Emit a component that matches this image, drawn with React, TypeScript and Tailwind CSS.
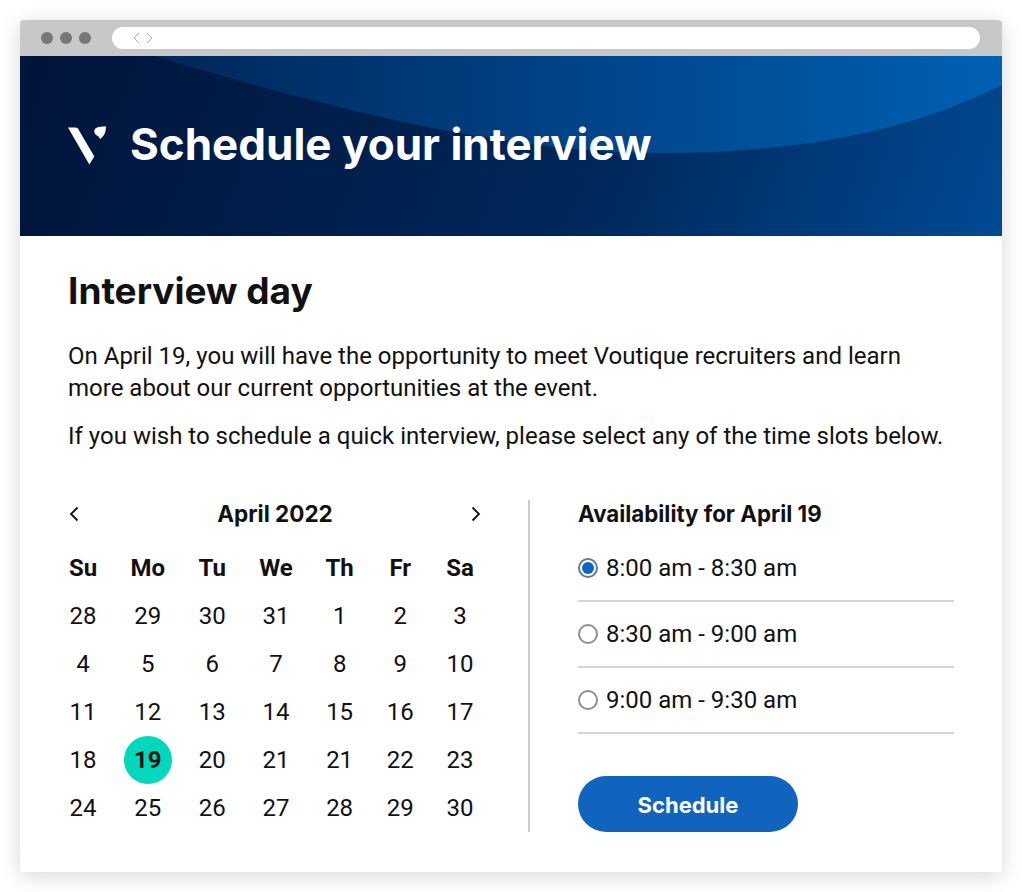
import { useState } from 'react';

const weeks = [
  ['28', '29', '30', '31', '1', '2', '3'],
  ['4', '5', '6', '7', '8', '9', '10'],
  ['11', '12', '13', '14', '15', '16', '17'],
  ['18', '19', '20', '21', '21', '22', '23'],
  ['24', '25', '26', '27', '28', '29', '30'],
];
const dayNames = ['Su', 'Mo', 'Tu', 'We', 'Th', 'Fr', 'Sa'];
const slots = ['8:00 am - 8:30 am', '8:30 am - 9:00 am', '9:00 am - 9:30 am'];

function Logo() {
  return (
    <svg width="40" height="40" viewBox="0 0 40 40" className="shrink-0 mt-[3px]">
      <path d="M0 1.5H7.5C9 1.5 9.8 2.2 10.5 3.4L26.3 30.5L21.3 38.5L0 1.5Z" fill="#fff" />
      <path d="M32 13.2C31.6 10.8 30.2 10.2 28.8 9.4C26.5 8.1 25.8 5.6 26.7 3.6C27.7 1.4 30 0.8 33 0.7L37.7 0.3C38.5 5 36.5 10 32 13.2Z" fill="#fff" />
    </svg>
  );
}

function Chevron({ dir }: { dir: 'left' | 'right' }) {
  return (
    <svg width="12" height="16" viewBox="0 0 12 16" fill="none" stroke="#111" strokeWidth="1.8">
      <path d={dir === 'left' ? 'M9.5 1.5L3 8L9.5 14.5' : 'M2.5 1.5L9 8L2.5 14.5'} />
    </svg>
  );
}

export default function App() {
  const [selected, setSelected] = useState(0);

  return (
    <div className="bg-white min-h-[892px] pt-5 px-5 font-['Roboto',sans-serif] text-[#111]">
      <div className="w-[982px] h-[852px] bg-white shadow-[0_4px_20px_rgba(0,0,0,0.16)] rounded-t overflow-hidden">
        {/* browser bar */}
        <div className="h-9 bg-[#c8c8c8] flex items-center pl-[21px] pr-[22px]">
          <div className="flex gap-[7px] w-[71px]">
            <span className="w-3 h-3 rounded-full bg-[#777]" />
            <span className="w-3 h-3 rounded-full bg-[#777]" />
            <span className="w-3 h-3 rounded-full bg-[#777]" />
          </div>
          <div className="flex-1 h-[22px] bg-white rounded-[11px] flex items-center pl-[21px]">
            <svg width="20" height="12" viewBox="0 0 20 12" fill="none" stroke="#aaa" strokeWidth="1">
              <path d="M6 1L1 6L6 11M14 1L19 6L14 11" />
            </svg>
          </div>
        </div>

        {/* hero */}
        <div className="relative h-[180px] bg-[linear-gradient(110deg,#01143a_0%,#00275a_58%,#004a94_100%)] flex items-center pl-12 pb-[4px]">
          <svg className="absolute inset-0" width="982" height="180" viewBox="0 0 982 180">
            <defs>
              <linearGradient id="wave" x1="0" y1="0" x2="1" y2="0">
                <stop offset="0" stopColor="#01265a" />
                <stop offset="0.5" stopColor="#004488" />
                <stop offset="1" stopColor="#0060b4" />
              </linearGradient>
            </defs>
            <path d="M135 0C300 50 480 97 640 97C780 97 890 75 982 29V0Z" fill="url(#wave)" />
          </svg>
          <div className="relative flex items-center gap-[22px]">
            <Logo />
            <h1 className="font-['Inter',sans-serif] font-bold text-[44px] leading-none text-white">Schedule your interview</h1>
          </div>
        </div>

        {/* content */}
        <div className="px-12 pt-[32px]">
          <h2 className="font-['Inter',sans-serif] font-bold text-[37px] leading-[46px] text-[#111]">Interview day</h2>
          <p className="mt-[26px] text-2xl leading-8">
            On April 19, you will have the opportunity to meet Voutique recruiters and learn more about our current opportunities at the event.
          </p>
          <p className="mt-4 text-2xl leading-8">If you wish to schedule a quick interview, please select any of the time slots below.</p>

          <div className="flex mt-[48px] h-[332px]">
            <div className="w-[414px]">
              <div className="flex items-center justify-between h-7">
                <Chevron dir="left" />
                <span className="font-['Inter',sans-serif] font-bold text-[22.5px]">April 2022</span>
                <Chevron dir="right" />
              </div>
              <div className="w-[406px] grid grid-cols-[30px_34px_30px_32px_30px_26px_28px] justify-between auto-rows-[48px] mt-4 items-center justify-items-center text-2xl">
                {dayNames.map(d => (
                  <span key={d} className="font-bold">{d}</span>
                ))}
                {weeks.flat().map((d, i) =>
                  i === 22 ? (
                    <span key={i} className="w-12 h-12 shrink-0 rounded-full bg-[#00d8bd] font-bold flex items-center justify-center">{d}</span>
                  ) : (
                    <span key={i}>{d}</span>
                  ),
                )}
              </div>
            </div>

            <div className="ml-[46px] border-l-2 border-[#ccc] pl-[48px] flex-1">
              <div className="font-['Inter',sans-serif] font-bold text-[22.3px] leading-7">Availability for April 19</div>
              <div className="mt-2">
                {slots.map((s, i) => (
                  <label key={s} className="flex items-center gap-[8px] h-[66px] border-b-2 border-[#d4d4d4] text-2xl cursor-pointer">
                    <input type="radio" name="slot" checked={selected === i} onChange={() => setSelected(i)} className="sr-only" />
                    <span className={`w-5 h-5 rounded-full border-2 flex items-center justify-center ${selected === i ? 'border-[#5f7aa0]' : 'border-[#8a8f98]'}`}>
                      {selected === i && <span className="w-3 h-3 rounded-full bg-[#1164bd]" />}
                    </span>
                    {s}
                  </label>
                ))}
              </div>
              <button className="mt-[42px] w-[220px] h-14 rounded-full bg-[#1164bd] text-white font-['Inter',sans-serif] font-bold text-[22px] pt-[2px]">Schedule</button>
            </div>
          </div>
        </div>
      </div>
    </div>
  );
}
